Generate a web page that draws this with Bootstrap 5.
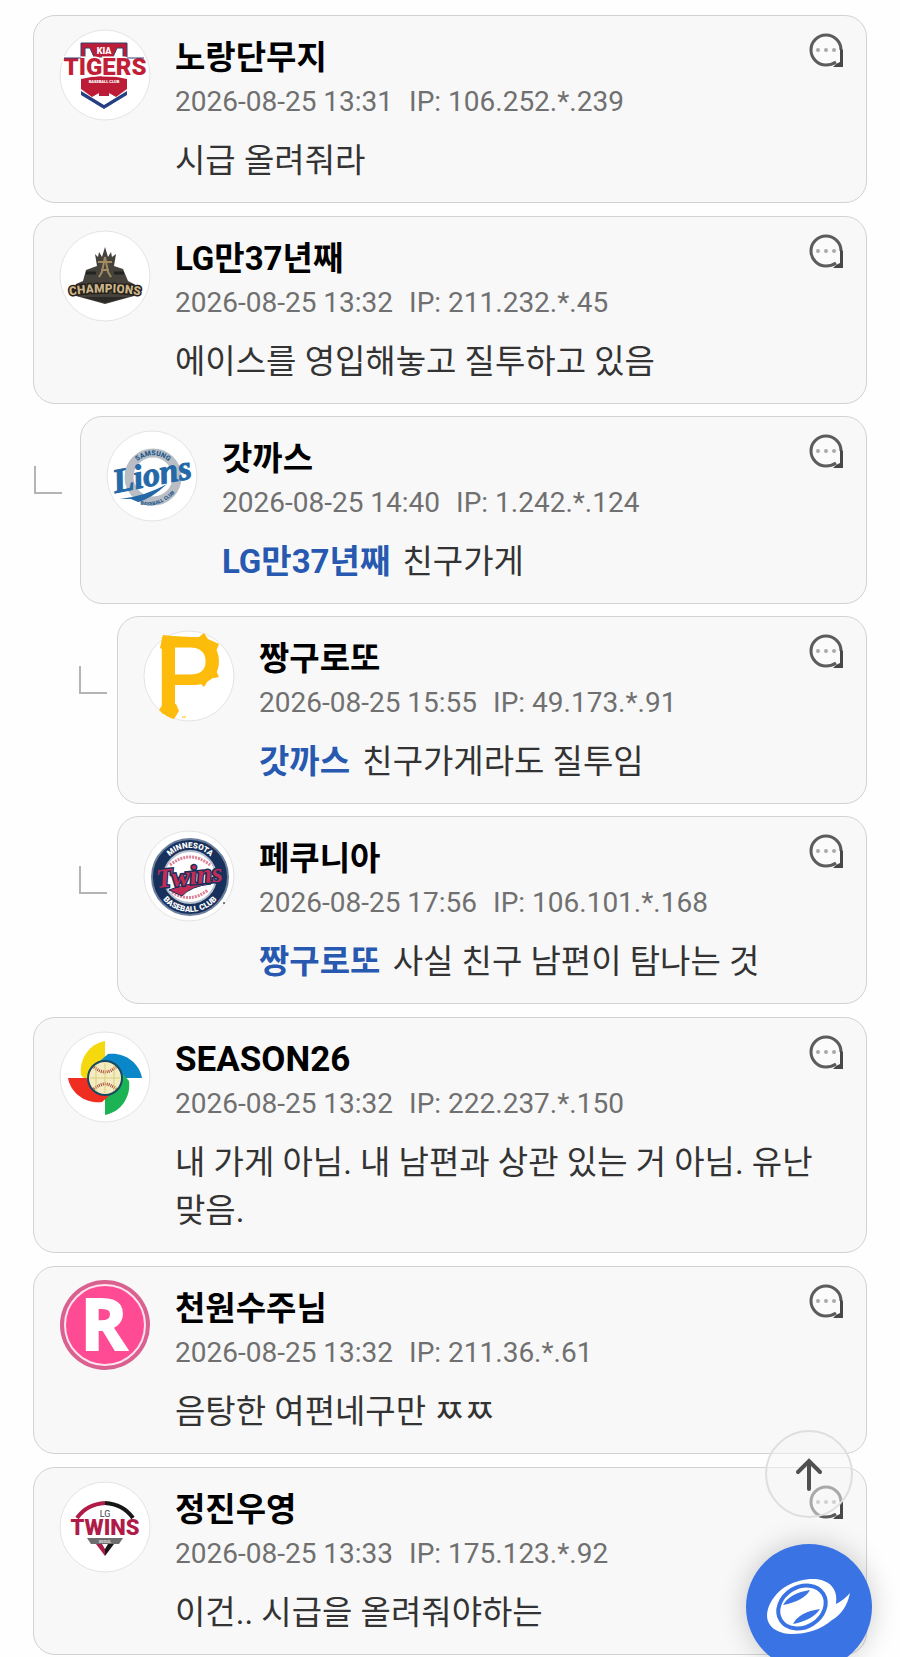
<!DOCTYPE html>
<html lang="ko">
<head>
<meta charset="utf-8">
<meta name="viewport" content="width=device-width, initial-scale=1">
<title>댓글</title>
<link href="https://cdn.jsdelivr.net/npm/bootstrap@5.3.0/dist/css/bootstrap.min.css" rel="stylesheet">
<style>
  body { font-family: Roboto, "Noto Sans CJK KR", sans-serif; background: #fefefe; color: #333; word-break: keep-all; }
  .thread-list { display: flex; flex-direction: column; gap: 13px; padding: 15px 33px 2px; }
  .reply-list { display: flex; flex-direction: column; gap: 12px; }
  .post { background: #f8f8f8; border: 1px solid #d0d3d3; border-radius: 22px; padding: 13px 25px 17px; gap: 24px; }
  .avatar { width: 92px; height: 92px; overflow: visible; }
  .post-text { padding-top: 5px; }
  .author { font-size: 33px; line-height: 48px; font-weight: 700; color: #000; }
  .author-latin { font-size: 35px; }
  .meta { font-size: 28px; line-height: 40px; color: #707070; gap: 16px; }
  .message { font-size: 33px; line-height: 48px; margin-top: 15px; }
  .mention { color: #2759b0; font-weight: 700; text-decoration: none; margin-right: 4px; }
  .reply-btn { top: 17px; right: 23px; width: 34px; height: 34px; line-height: 0; }
  .reply-btn svg { width: 34px; height: 34px; }
  .elbow { width: 28px; height: 28px; margin-top: 50px; border-left: 2px solid #b4b4b4; border-bottom: 2px solid #b4b4b4; }
  .depth-1 { gap: 18px; padding-left: 1px; }
  .depth-2 { gap: 10px; padding-left: 46px; }
  .to-top { width: 88px; height: 88px; right: 47px; bottom: 139px; background: rgba(246,246,246,.5); border: 2px solid #dedede; }
  .fab { width: 126px; height: 126px; right: 28px; bottom: -13px; background: #3a73e3; box-shadow: 0 0 28px rgba(0,0,0,.2); }
  .logo-sans { font-family: Roboto, sans-serif; font-weight: 900; }
  .logo-serif { font-family: "Liberation Serif", serif; font-weight: 700; font-style: italic; }
</style>
</head>
<body>
<svg width="0" height="0" class="d-none" aria-hidden="true">
  <symbol id="bubble" viewBox="0 0 34 34">
    <path d="M32 17A15 15 0 1 0 17 32H32Z" fill="#fbfbfb"/>
    <path d="M32 17A15 15 0 1 0 17 32C21 32 24 31 27 29" fill="none" stroke="#5c5c5c" stroke-width="3"/>
    <path d="M31 15L34 17V34H24L27 31L31 29Z" fill="#484848"/>
    <g fill="#aaa"><circle cx="9" cy="17" r="2"/><circle cx="17" cy="17" r="2"/><circle cx="25" cy="17" r="2"/></g>
  </symbol>
</svg>

<main class="thread-list">

    <article class="post d-flex position-relative">
      <svg class="avatar flex-shrink-0" viewBox="0 0 92 92">
        <circle cx="46" cy="46" r="45" fill="#fff" stroke="#e4e4e4"/>
        <path d="M22 14H68V31H64V19H58L54 28H35L31 19H26V31H22Z" fill="#bd1c36" stroke="#34406f" stroke-width="1"/>
        <path d="M31 17H58L53 28H36Z" fill="#bd1c36"/>
        <text class="logo-sans" x="45" y="25" font-size="9" text-anchor="middle" fill="#fff">KIA</text>
        <path d="M22 50Q45 44 68 50V60L57 68L50 64V67H40V64L33 68L22 60Z" fill="#bd1c36"/>
        <path d="M22 62L45 76L68 62V66L45 80L22 66Z" fill="#263f82"/>
        <text class="logo-sans" x="46" y="46" font-size="24" text-anchor="middle" fill="#c11f37" stroke="#fff" stroke-width="3" paint-order="stroke">TIGERS</text>
        <path d="M5 29H22M68 29H85" stroke="#34406f" stroke-width="1"/>
        <text class="logo-sans" x="45" y="54" font-size="4" text-anchor="middle" fill="#fff">BASEBALL CLUB</text>
      </svg>
      <div class="post-text flex-grow-1">
        <h2 class="author m-0">노랑단무지</h2>
        <div class="meta d-flex"><time>2026-08-25 13:31</time><span>IP: 106.252.*.239</span></div>
        <p class="message mb-0">시급 올려줘라</p>
      </div>
      <button type="button" class="reply-btn btn p-0 border-0 position-absolute" aria-label="답글"><svg><use href="#bubble"/></svg></button>
    </article>

    <div class="reply-list">
      <article class="post d-flex position-relative">
        <svg class="avatar flex-shrink-0" viewBox="0 0 92 92">
          <circle cx="46" cy="46" r="45" fill="#fff" stroke="#e4e4e4"/>
          <path d="M36 24L39 27L40 22L43 27L46 17L49 27L52 22L53 27L57 24L55 36L64 39L69 51L75 54V66L46 74L17 66V54L24 51L27 40L38 36Z" fill="#45423c"/>
          <path d="M46 27L43 42L40 47M46 27L49 42L52 47M42 40H50M39 32H53" fill="none" stroke="#a08b62" stroke-width="2"/>
          <path d="M27 43H37M55 43H65" stroke="#222" stroke-width="3"/>
          <path id="champ-arc" d="M8 66Q46 59 84 66" fill="none"/>
          <text class="logo-sans" font-size="12" fill="#cbb68a" stroke="#27221b" stroke-width="3" paint-order="stroke" text-anchor="middle"><textPath href="#champ-arc" startOffset="50%">CHAMPIONS</textPath></text>
          <path d="M23 67H69L46 73Z" fill="#2b2a29"/>
        </svg>
        <div class="post-text flex-grow-1">
          <h2 class="author m-0">LG만37년째</h2>
          <div class="meta d-flex"><time>2026-08-25 13:32</time><span>IP: 211.232.*.45</span></div>
          <p class="message mb-0">에이스를 영입해놓고 질투하고 있음</p>
        </div>
        <button type="button" class="reply-btn btn p-0 border-0 position-absolute" aria-label="답글"><svg><use href="#bubble"/></svg></button>
      </article>

      <div class="depth-1 d-flex align-items-start">
        <span class="elbow flex-shrink-0"></span>
        <article class="post d-flex position-relative flex-grow-1">
          <svg class="avatar flex-shrink-0" viewBox="0 0 92 92">
            <circle cx="46" cy="46" r="45" fill="#fff" stroke="#e4e4e4"/>
            <circle cx="47" cy="47" r="24" fill="#fff" stroke="#b9bec5" stroke-width="9"/>
            <path id="samsung-arc" d="M26 39A23 23 0 0 1 68 39" fill="none"/>
            <text class="logo-sans" font-size="7" fill="#255a8c" text-anchor="middle"><textPath href="#samsung-arc" startOffset="50%">SAMSUNG</textPath></text>
            <path id="lions-arc" d="M33 74Q52 80 70 62" fill="none"/>
            <text class="logo-sans" font-size="5" fill="#255a8c" text-anchor="middle"><textPath href="#lions-arc" startOffset="50%">BASEBALL CLUB</textPath></text>
            <text class="logo-serif" x="9" y="63" font-size="34" fill="#2468a8" stroke="#2468a8" stroke-width="1" transform="rotate(-11 9 63)">Lions</text>
            <path d="M14 69Q40 66 61 54Q45 69 32 72L25 69Z" fill="#2468a8"/>
          </svg>
          <div class="post-text flex-grow-1">
            <h2 class="author m-0">갓까스</h2>
            <div class="meta d-flex"><time>2026-08-25 14:40</time><span>IP: 1.242.*.124</span></div>
            <p class="message mb-0"><a class="mention" href="#">LG만37년째</a> 친구가게</p>
          </div>
          <button type="button" class="reply-btn btn p-0 border-0 position-absolute" aria-label="답글"><svg><use href="#bubble"/></svg></button>
        </article>
      </div>

      <div class="depth-2 d-flex align-items-start">
        <span class="elbow flex-shrink-0"></span>
        <article class="post d-flex position-relative flex-grow-1">
          <svg class="avatar flex-shrink-0" viewBox="0 0 92 92">
            <circle cx="46" cy="46" r="45" fill="#fff" stroke="#e4e4e4"/>
            <text x="11" y="84" font-family="Roboto, sans-serif" font-weight="500" font-size="108" fill="#fdbc0b">P</text>
            <path d="M21 20L17 18L20 5Q40 7 56 7L61 3L65 9L76 14L72 24L58 15H24Z" fill="#fdbc0b"/>
            <path d="M66 36L72 38L76 47L66 49L61 57L54 50Z" fill="#fdbc0b"/>
            <path d="M20 74L16 80Q23 87 31 89L36 81L33 74Z" fill="#fdbc0b"/>
            <path d="M39 87H43" stroke="#fdbc0b"/>
          </svg>
          <div class="post-text flex-grow-1">
            <h2 class="author m-0">짱구로또</h2>
            <div class="meta d-flex"><time>2026-08-25 15:55</time><span>IP: 49.173.*.91</span></div>
            <p class="message mb-0"><a class="mention" href="#">갓까스</a> 친구가게라도 질투임</p>
          </div>
          <button type="button" class="reply-btn btn p-0 border-0 position-absolute" aria-label="답글"><svg><use href="#bubble"/></svg></button>
        </article>
      </div>

      <div class="depth-2 d-flex align-items-start">
        <span class="elbow flex-shrink-0"></span>
        <article class="post d-flex position-relative flex-grow-1">
          <svg class="avatar flex-shrink-0" viewBox="0 0 92 92">
            <circle cx="46" cy="46" r="45" fill="#fff" stroke="#e4e4e4"/>
            <circle cx="47" cy="47" r="38" fill="#17305c" stroke="#6b7f9c" stroke-width="2"/>
            <circle cx="47" cy="47" r="26" fill="#fff" stroke="#b5c0ce" stroke-width="2"/>
            <path d="M27 35Q47 19 67 35M29 62Q47 74 65 60" fill="none" stroke="#df7f96" stroke-width="3" stroke-dasharray="2 1"/>
            <path id="minn-arc" d="M18 47A29 29 0 0 1 76 47" fill="none"/>
            <text class="logo-sans" font-size="8" fill="#fff" text-anchor="middle"><textPath href="#minn-arc" startOffset="50%">MINNESOTA</textPath></text>
            <path id="club-arc" d="M12 47A35 35 0 0 0 82 47" fill="none"/>
            <text class="logo-sans" font-size="8" fill="#fff" text-anchor="middle"><textPath href="#club-arc" startOffset="50%">BASEBALL CLUB</textPath></text>
            <path d="M26 60Q48 51 68 54Q48 56 39 66Z" fill="#c32c54" stroke="#17305c"/>
            <text class="logo-serif" x="14" y="58" font-size="27" fill="#c32c54" stroke="#17305c" stroke-width="3" paint-order="stroke" transform="rotate(-6 14 58)">Twins</text>
            <circle cx="81" cy="73" r="1" fill="#555"/>
          </svg>
          <div class="post-text flex-grow-1">
            <h2 class="author m-0">페쿠니아</h2>
            <div class="meta d-flex"><time>2026-08-25 17:56</time><span>IP: 106.101.*.168</span></div>
            <p class="message mb-0"><a class="mention" href="#">짱구로또</a> 사실 친구 남편이 탐나는 것</p>
          </div>
          <button type="button" class="reply-btn btn p-0 border-0 position-absolute" aria-label="답글"><svg><use href="#bubble"/></svg></button>
        </article>
      </div>
    </div>

    <article class="post d-flex position-relative">
      <svg class="avatar flex-shrink-0" viewBox="0 0 92 92">
        <circle cx="46" cy="46" r="45" fill="#fff" stroke="#e4e4e4"/>
        <path d="M46 10C30 13 20 28 22 44L29 52L46 28Z" fill="#f5d80e"/>
        <path d="M83 47C80 31 65 21 49 23L41 30L65 47Z" fill="#0a87c9"/>
        <path d="M46 84C62 81 72 66 70 50L63 42L46 66Z" fill="#1bb354"/>
        <path d="M9 47C12 63 27 73 43 71L51 64L27 47Z" fill="#ef2d20"/>
        <circle cx="46" cy="47" r="18" fill="#164a63"/>
        <circle cx="46" cy="47" r="16" fill="#f4ecc0"/>
        <path d="M35 36Q46 46 57 36M35 58Q46 48 57 58" fill="none" stroke="#a8413a" stroke-width="3" stroke-dasharray="1 1"/>
        <path d="M37 34V60M46 32V62M55 34V60M31 47H61" stroke="#d6cf7b" stroke-width="1"/>
      </svg>
      <div class="post-text flex-grow-1">
        <h2 class="author author-latin m-0">SEASON26</h2>
        <div class="meta d-flex"><time>2026-08-25 13:32</time><span>IP: 222.237.*.150</span></div>
        <p class="message mb-0">내 가게 아님. 내 남편과 상관 있는 거 아님. 유난 맞음.</p>
      </div>
      <button type="button" class="reply-btn btn p-0 border-0 position-absolute" aria-label="답글"><svg><use href="#bubble"/></svg></button>
    </article>

    <article class="post d-flex position-relative">
      <svg class="avatar flex-shrink-0" viewBox="0 0 92 92">
        <circle cx="46" cy="45" r="45" fill="#d9608f"/>
        <circle cx="46" cy="45" r="40" fill="#ff4a94" stroke="#ffe3ee" stroke-width="2"/>
        <text x="45" y="70" font-family="Open Sans, sans-serif" font-weight="700" font-size="71" text-anchor="middle" fill="#fff" stroke="#fff" stroke-width="2">R</text>
      </svg>
      <div class="post-text flex-grow-1">
        <h2 class="author m-0">천원수주님</h2>
        <div class="meta d-flex"><time>2026-08-25 13:32</time><span>IP: 211.36.*.61</span></div>
        <p class="message mb-0">음탕한 여편네구만 ㅉㅉ</p>
      </div>
      <button type="button" class="reply-btn btn p-0 border-0 position-absolute" aria-label="답글"><svg><use href="#bubble"/></svg></button>
    </article>

    <article class="post d-flex position-relative">
      <svg class="avatar flex-shrink-0" viewBox="0 0 92 92">
        <circle cx="46" cy="46" r="45" fill="#fff" stroke="#e4e4e4"/>
        <path d="M18 37Q28 23 46 22" fill="none" stroke="#b01c48" stroke-width="4"/>
        <path d="M46 22Q64 23 74 37" fill="none" stroke="#171717" stroke-width="4"/>
        <text x="46" y="36" font-family="Roboto, sans-serif" font-size="9" text-anchor="middle" fill="#444">LG</text>
        <text class="logo-sans" x="46" y="54" font-size="22" text-anchor="middle" fill="#b01c48">TWINS</text>
        <path d="M28 57H64L60 63H32Z" fill="#6d6d6d"/>
        <text class="logo-sans" x="46" y="62" font-size="4" text-anchor="middle" fill="#ddd">SEOUL</text>
        <path d="M37 63H43L46 68V75Z" fill="#b01c48"/>
        <path d="M55 63H49L46 68V75Z" fill="#171717"/>
      </svg>
      <div class="post-text flex-grow-1">
        <h2 class="author m-0">정진우영</h2>
        <div class="meta d-flex"><time>2026-08-25 13:33</time><span>IP: 175.123.*.92</span></div>
        <p class="message mb-0">이건.. 시급을 올려줘야하는</p>
      </div>
      <button type="button" class="reply-btn btn p-0 border-0 position-absolute" aria-label="답글"><svg><use href="#bubble"/></svg></button>
    </article>
</main>

<button type="button" class="to-top btn rounded-circle position-fixed p-0 d-flex align-items-center justify-content-center" aria-label="맨 위로">
  <svg width="84" height="84" viewBox="0 0 84 84" fill="none" stroke="#505050" stroke-width="4" stroke-linecap="round"><path d="M42 57V29M31 40L42 29L53 40"/></svg>
</button>
<button type="button" class="fab btn rounded-circle position-fixed p-0 border-0" aria-label="메뉴">
  <svg class="d-block" width="126" height="126" viewBox="0 0 126 126">
    <path d="M90 60Q98 56 104 49Q100 68 86 76Q70 90 45 90C25 89 17 77 23 62C31 43 51 34 70 35C86 37 92 47 90 60Z" fill="#fff"/>
    <ellipse cx="56" cy="63" rx="25" ry="20" fill="#fff" stroke="#3a73e3" stroke-width="4" transform="rotate(-32 56 63)"/>
    <path d="M37 61Q44 49 64 46Q58 57 37 61ZM47 80Q53 68 74 65Q67 76 47 80Z" fill="#3a73e3"/>
  </svg>
</button>
<script src="https://cdn.jsdelivr.net/npm/bootstrap@5.3.0/dist/js/bootstrap.bundle.min.js"></script>
</body>
</html>
